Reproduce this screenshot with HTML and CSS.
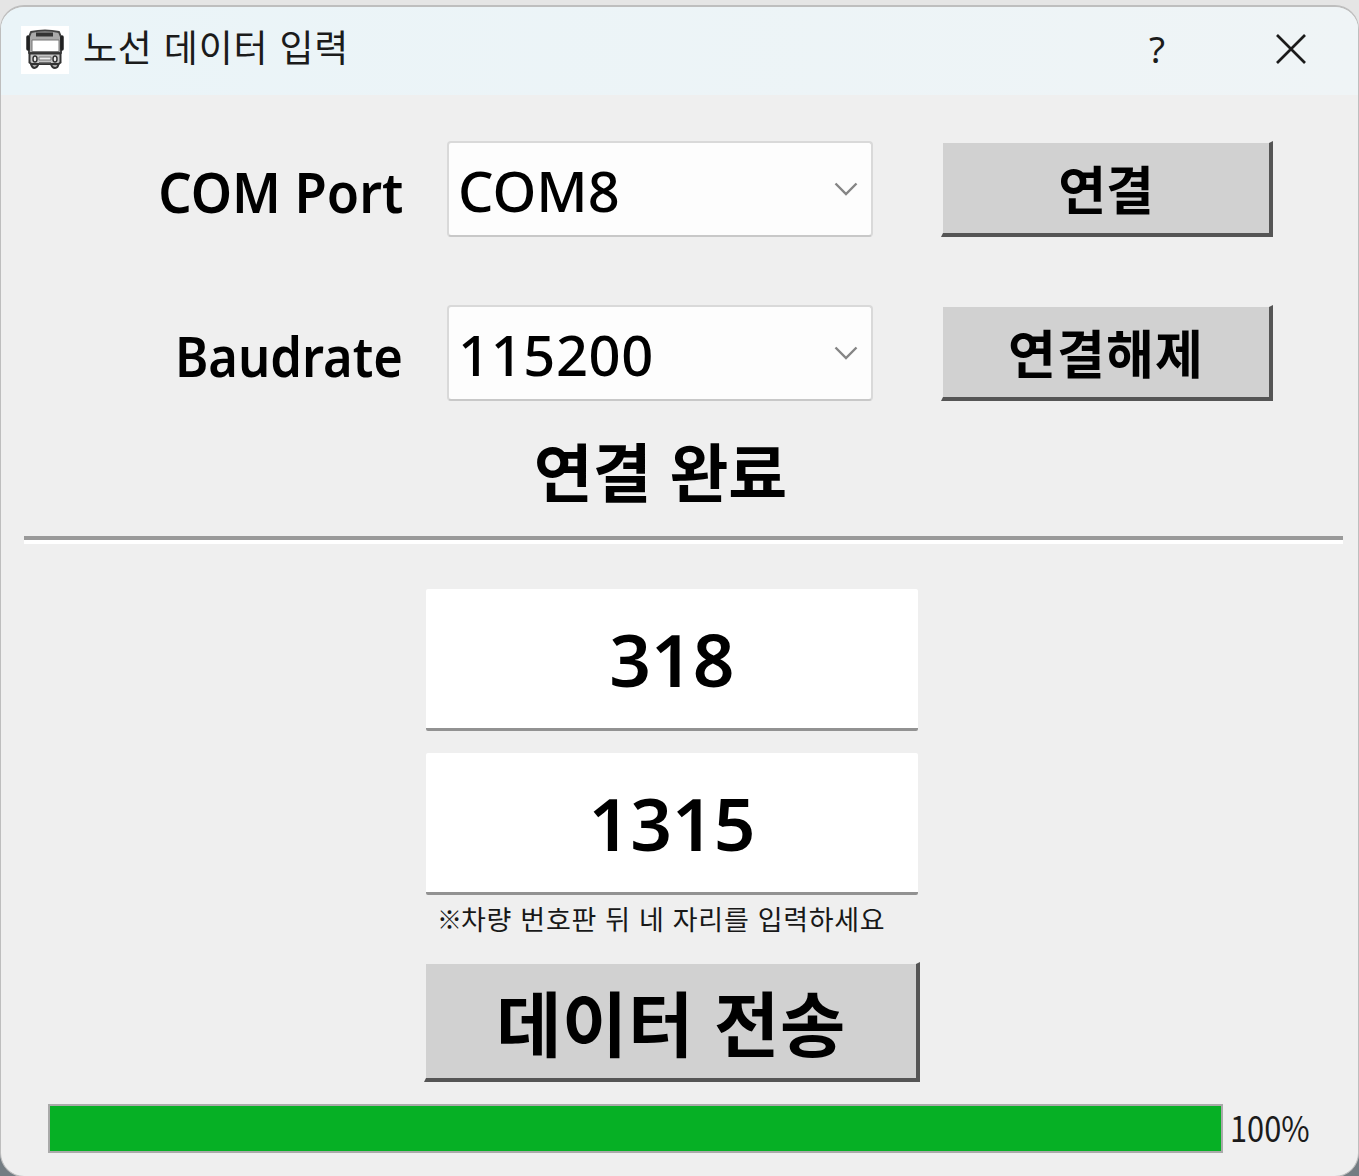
FILE: index.html
```html
<!DOCTYPE html>
<html lang="ko">
<head>
<meta charset="utf-8">
<title>노선 데이터 입력</title>
<link rel="stylesheet" href="styles.css">
</head>
<body>
<main class="window">
  <header class="titlebar">
    <svg class="app-icon" viewBox="0 0 48 48">
      <rect width="48" height="48" fill="#fff"/>
      <path d="M10 6q14-3 28 0l2 5v16H8V11z" fill="#aaa" stroke="#444" stroke-width="2" stroke-linejoin="round"/>
      <path d="M15 6.500h17v4H15z" fill="#333"/>
      <path d="M11 14h27v11.500H11z" fill="#fff" stroke="#777" stroke-width="1"/>
      <path d="M7 11v12M41 11v12" stroke="#222" stroke-width="3.500" stroke-linecap="round"/>
      <path d="M8.500 27.500h31v9l-2 1.500h-27l-2-1.500z" fill="#c5c5c5" stroke="#333" stroke-width="2"/>
      <path d="M18 31h12v3H18z" fill="#eee" stroke="#777"/>
      <path d="M18 37h12" stroke="#555" stroke-width="1.500"/>
      <ellipse cx="14" cy="33" rx="2" ry="3" fill="#eee" stroke="#333" stroke-width="1.500"/>
      <ellipse cx="34" cy="33" rx="2" ry="3" fill="#eee" stroke="#333" stroke-width="1.500"/>
      <path d="M10 38q1 4 3.500 4t4-4zM30 38q1 4 4 4t3.500-4z" fill="#aaa" stroke="#333" stroke-width="2" stroke-linejoin="round"/>
    </svg>
    <h1 class="title"><span>노선 데이터 입력</span></h1>
    <span class="help">?</span>
    <svg class="close" viewBox="0 0 32 32"><path d="M2 2l28 28M30 2L2 30" fill="none" stroke="#1b1b1b" stroke-width="2.700"/></svg>
  </header>

  <section class="connection">
    <span class="label"><span class="t-port">COM Port</span></span>
    <div class="combo"><span class="t-com">COM8</span><svg class="chevron" viewBox="0 0 24 14"><path d="M1.500 1.500L12 12 22.500 1.500"/></svg></div>
    <div class="button"><span class="t-connect">연결</span></div>
    <span class="label"><span class="t-baud">Baudrate</span></span>
    <div class="combo"><span class="t-rate">115200</span><svg class="chevron" viewBox="0 0 24 14"><path d="M1.500 1.500L12 12 22.500 1.500"/></svg></div>
    <div class="button"><span class="t-disconnect">연결해제</span></div>
  </section>

  <p class="status"><span>연결 완료</span></p>
  <div class="divider"></div>

  <section class="entry">
    <div class="field"><span>318</span></div>
    <div class="field"><span>1315</span></div>
    <p class="hint"><span class="mark">※</span><span class="hint-text">차량 번호판 뒤 네 자리를 입력하세요</span></p>
    <div class="button send"><span>데이터 전송</span></div>
  </section>

  <footer class="progress">
    <div class="track"><div class="fill" style="width:100%"></div></div>
    <span class="percent">100%</span>
  </footer>
</main>
</body>
</html>
```
FILE: styles.css
```css
* { box-sizing: border-box; }
body {
  margin: 0;
  height: 1176px;
  padding-top: 5px;
  overflow: hidden;
  background: linear-gradient(#e5e5e5 0, #e5e5e5 50%, #747d83 50%, #747d83 98%);
  font-family: "Noto Sans", "Noto Sans CJK KR", sans-serif;
  color: #000;
}
h1, p { margin: 0; font-weight: 400; }
span { display: inline-block; white-space: pre; }
.window {
  height: 1172px;
  width: 1359px;
  display: flex;
  flex-direction: column;
  background: #efefef;
  border: solid #bebebe;
  border-width: 2px 1px 1px 1px;
  border-radius: 24px;
  overflow: hidden;
}
.titlebar {
  height: 88px;
  flex: none;
  display: flex;
  align-items: center;
  padding: 0 51px 3px 20px;
  background: linear-gradient(90deg, #eaf4f8, #eff4f6);
}
.app-icon { width: 48px; height: 48px; }
.title {
  flex: 1;
  margin: -8px 0 0 14px;
  font-family: "Noto Sans CJK KR", sans-serif;
  font-size: 37px;
  line-height: 60px;
  letter-spacing: 0.8px;
  color: #1b1b1b;
}
.help { margin: -2px 110px 0 0; font-size: 37px; line-height: 60px; color: #1b1b1b; }
.close { width: 32px; height: 32px; margin-top: -1px; }
.connection {
  display: grid;
  grid-template-columns: 402px 425px 332px;
  row-gap: 68px;
  padding-top: 46px;
  grid-auto-rows: 96px;
}
.label { text-align: right; height: 96px; font-size: 56px; font-weight: 600; line-height: 100px; }
.t-port, .t-baud { transform-origin: right center; }
.t-port { transform: scaleX(0.938); }
.t-baud { transform: scaleX(0.905); }
.combo {
  margin-left: 44px;
  width: 426px;
  height: 96px;
  display: flex;
  align-items: center;
  justify-content: space-between;
  padding: 2px 13px 0 9px;
  border: 2px solid #d9d9d9;
  border-bottom-color: #c8c8c8;
  border-radius: 4px;
  background: #fdfdfd;
  font-size: 56px;
  font-weight: 500;
  line-height: 90px;
}
.t-rate { letter-spacing: 0.6px; }
.chevron { width: 24px; height: 14px; margin-top: -2px; fill: none; stroke: #858585; stroke-width: 2.4px; }
.button {
  margin-left: 113px;
  width: 332px;
  height: 96px;
  border: solid;
  border-width: 2px 4px 4px 2px;
  border-color: #efefef #555 #555 #efefef;
  background: #d1d1d1;
  text-align: center;
  font-family: "Noto Sans CJK KR", sans-serif;
  font-size: 52px;
  font-weight: 700;
  line-height: 90px;
}
.t-disconnect { letter-spacing: 1.2px; }
.status {
  height: 135px;
  padding-top: 23px;
  padding-right: 38px;
  text-align: center;
  font-family: "Noto Sans CJK KR", sans-serif;
  font-size: 64px;
  font-weight: 700;
  line-height: 90px;
}
.divider {
  flex: none;
  height: 8px;
  margin: 0 15px 0 23px;
  border-top: 4px solid #999;
  border-bottom: 4px solid #fff;
}
.entry { width: 496px; margin: 45px 0 0 423px; }
.field {
  width: 492px;
  height: 142px;
  margin: 0 0 22px 2px;
  background: #fff;
  border-bottom: 3px solid #929292;
  border-radius: 2px;
  text-align: center;
  font-size: 73px;
  font-weight: 600;
  line-height: 140px;
}
.hint {
  display: flex;
  align-items: center;
  height: 50px;
  margin-top: -24px;
  padding-left: 13px;
  font-family: "Noto Sans CJK KR", sans-serif;
  font-size: 27px;
  color: #181818;
}
.mark { width: 24px; font-size: 25px; }
.hint-text { letter-spacing: 0.7px; }
.send { width: 496px; height: 120px; margin: 19px 0 0; font-size: 71px; line-height: 113px; }
.send span { letter-spacing: 0.5px; }
.progress { display: flex; align-items: center; margin: 22px 0 0 47px; height: 49px; }
.track { width: 1175px; height: 49px; border: 2px solid #aaa; }
.fill { height: 100%; background: #06b025; }
.percent {
  margin: -4px 0 0 7px;
  font-family: "Noto Sans CJK KR", sans-serif;
  font-size: 35px;
  font-weight: 400;
  line-height: 47px;
  color: #1b1b1b;
  transform: scaleX(0.88);
  transform-origin: left center;
}
```
